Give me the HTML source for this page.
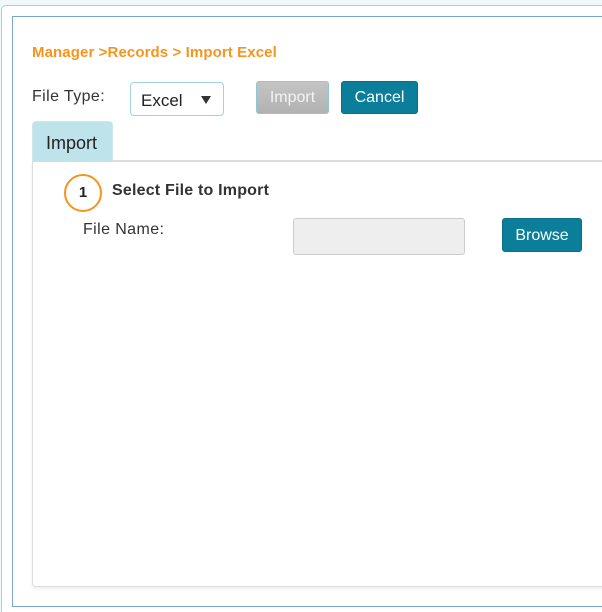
<!DOCTYPE html>
<html><head><meta charset="utf-8"><style>
*{box-sizing:border-box;margin:0;padding:0}
html,body{width:602px;height:612px;overflow:hidden}
body{background:#f1f8fb;font-family:"Liberation Sans",sans-serif;position:relative}
.outer{position:absolute;left:1px;top:5px;width:620px;height:620px;border:1px solid #9fd3df;border-radius:5px;background:#fff}
.inner{position:absolute;left:12px;top:16px;width:620px;height:591px;border:1px solid #7ba3d3;background:#fff}
.bc{position:absolute;left:32px;top:44px;color:#f7941d;font-weight:bold;font-size:15px;letter-spacing:0.1px}
.lbl{position:absolute;font-size:16px;color:#333;letter-spacing:0.4px}
.sel{position:absolute;left:130px;top:82px;width:94px;height:34px;border:1px solid #9fd3df;border-radius:4px;font-size:17px;color:#222;padding:8px 0 0 10px}
.sel span{position:absolute;right:12px;top:13px;width:0;height:0;border-left:5px solid transparent;border-right:5px solid transparent;border-top:8px solid #333}
.btn{position:absolute;height:33px;border-radius:3px;color:#fff;font-size:16px;text-align:center;line-height:32px}
.imp{left:256px;top:81px;width:73px;background:linear-gradient(#c4c4c4,#b2b2b2);border:1px solid #8fc6d8;color:#f4f4f4}
.can{left:341px;top:81px;width:77px;background:#0b7f9a;border:1px solid #0a6f87}
.tab{position:absolute;left:32px;top:121px;width:81px;height:41px;background:#bfe3ea;border:1px solid #cde6ec;border-bottom:none;border-radius:4px 4px 0 0;font-size:18px;color:#222;padding:11px 0 0 13px}
.panel{position:absolute;left:32px;top:160px;width:600px;height:427px;border:1px solid #ddd;border-top:2px solid #ddd;border-radius:0 0 0 4px;background:#fff;box-shadow:0 2px 3px #eee}
.circ{position:absolute;left:64px;top:174px;width:38px;height:38px;border:2px solid #f7941d;border-radius:50%;font-size:15px;font-weight:bold;color:#222;text-align:center;line-height:34px}
.h{position:absolute;left:112px;top:182px;font-size:16px;font-weight:bold;color:#333;letter-spacing:0.2px}
.inp{position:absolute;left:293px;top:218px;width:172px;height:37px;background:#eee;border:1px solid #ccc;border-radius:3px}
.br{left:502px;top:218px;width:80px;height:34px;background:#0b7f9a;border:1px solid #0a6f87;line-height:34px}
</style></head><body>
<div class="outer"></div>
<div class="inner"></div>
<div class="bc">Manager &gt;Records &gt; Import Excel</div>
<div class="lbl" style="left:32px;top:88px">File Type:</div>
<div class="sel">Excel<span></span></div>
<div class="btn imp">Import</div>
<div class="btn can">Cancel</div>
<div class="panel"></div>
<div class="tab">Import</div>
<div class="circ">1</div>
<div class="h">Select File to Import</div>
<div class="lbl" style="left:83px;top:221px">File Name:</div>
<div class="inp"></div>
<div class="btn br">Browse</div>
</body></html>
